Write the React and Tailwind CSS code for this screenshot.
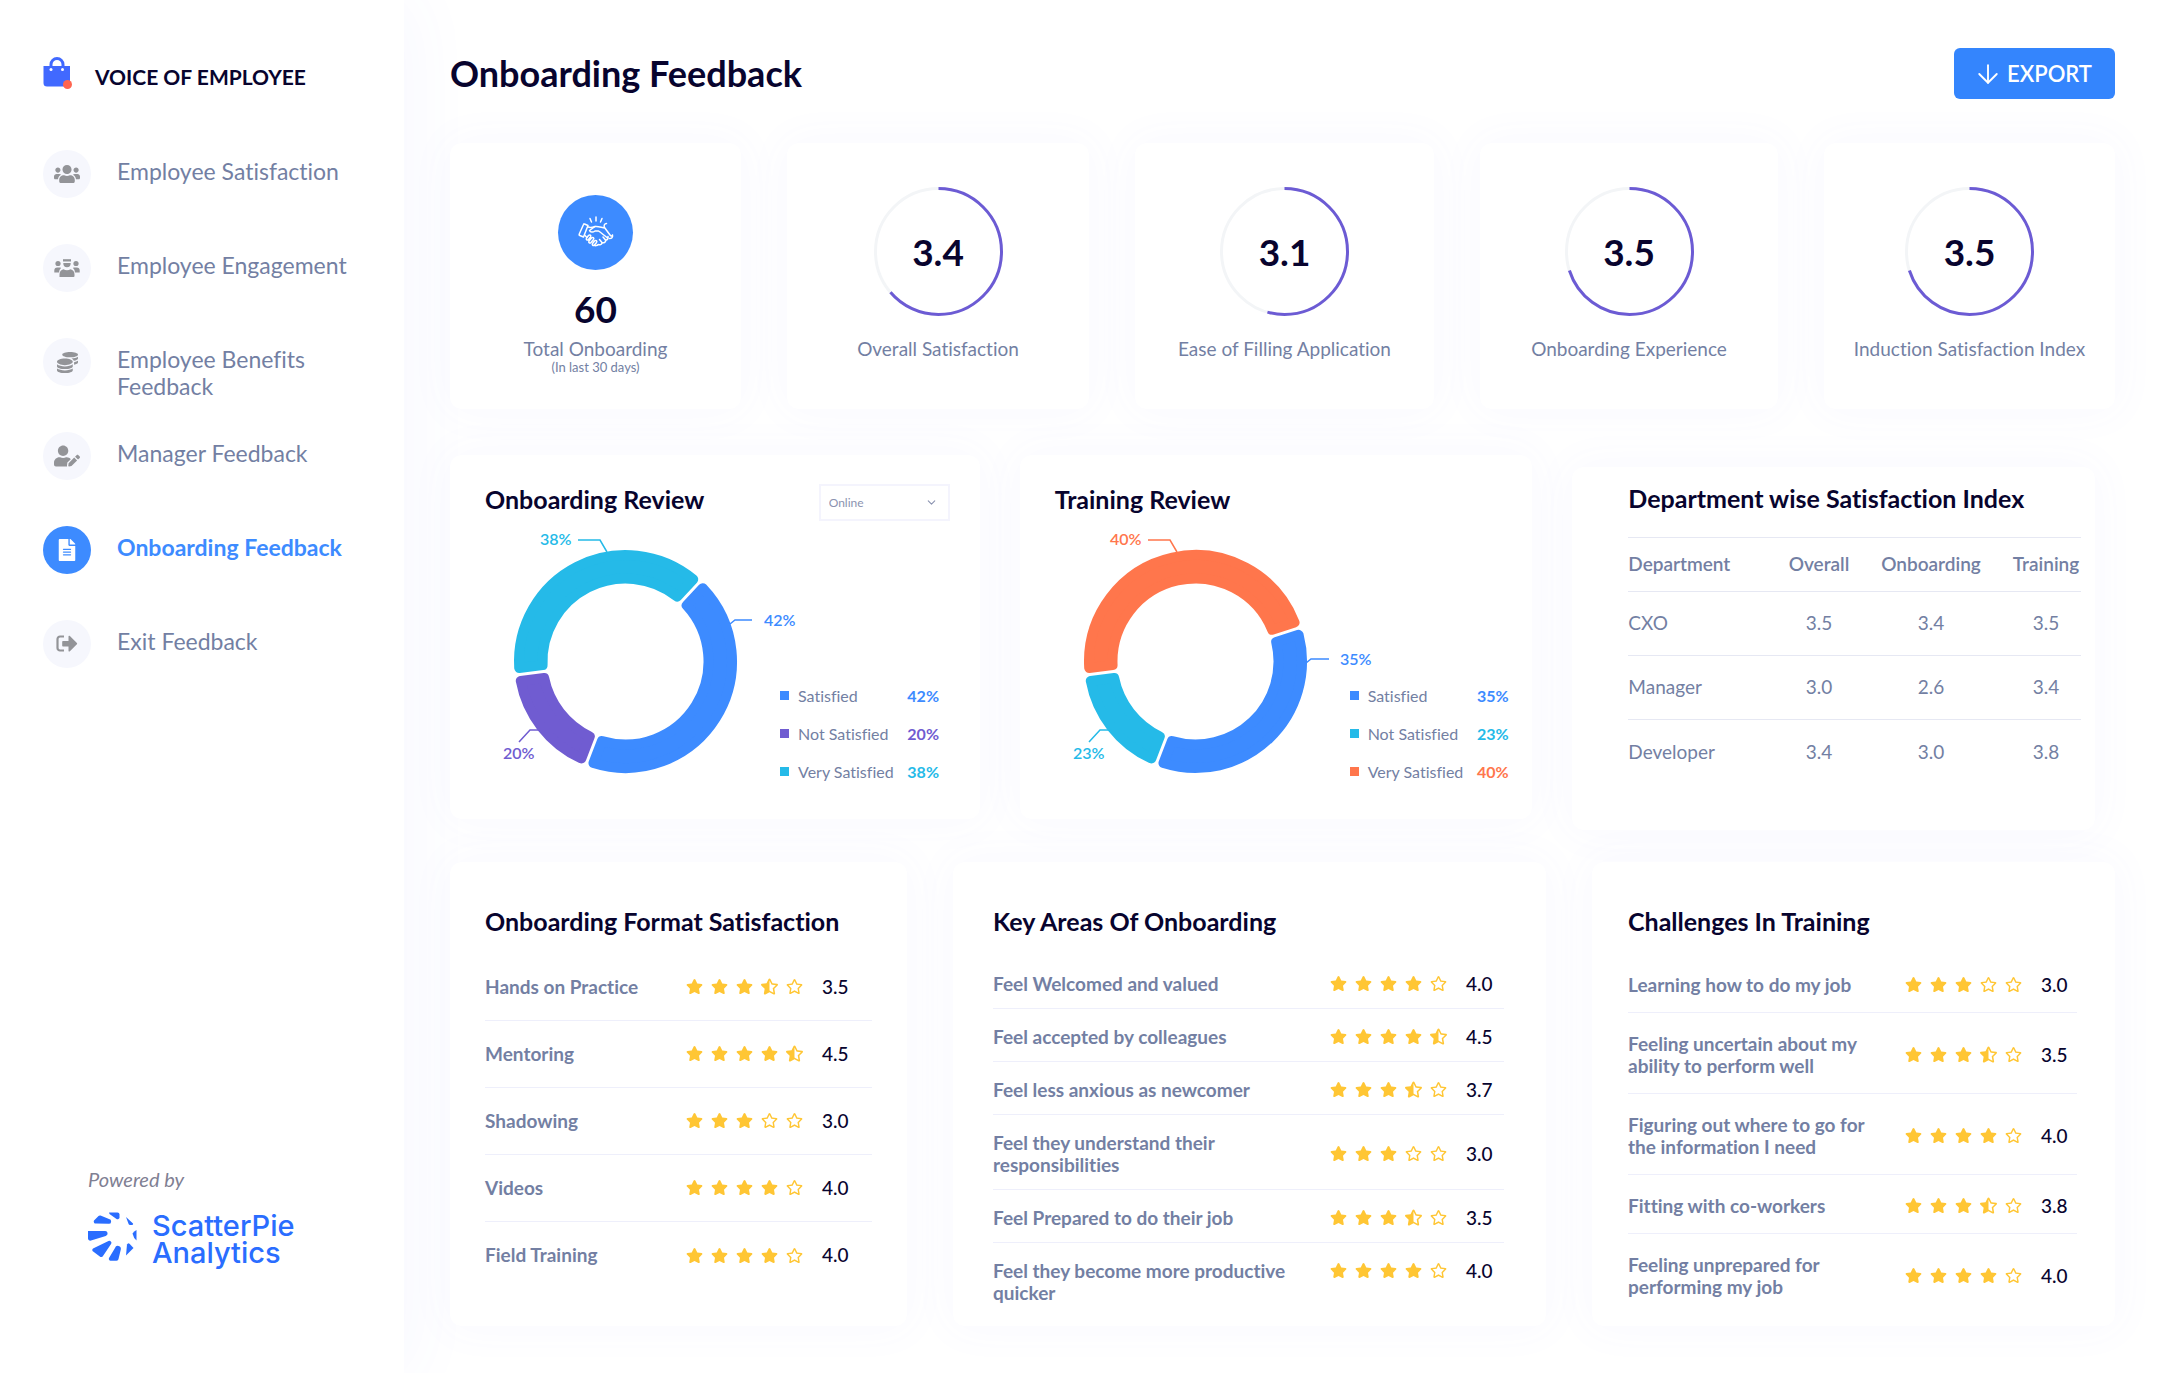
import React from "react";
import { FaUsers, FaCoins, FaUserEdit, FaFileAlt, FaStar, FaStarHalfAlt, FaRegStar } from "react-icons/fa";
import { ArrowDown, ChevronDown } from "lucide-react";

const BLUE = "#3d8bff";
const CYAN = "#25bae8";
const PURPLE = "#705cd1";
const ORANGE = "#ff764c";

function BagLogo() {
  return (
    <svg viewBox="0 0 30 34" className="h-[34px] w-[30px]" aria-hidden="true">
      <path d="M8 11V8.500a6 6 0 0 1 12 0V11" fill="none" stroke="#4169ff" strokeWidth="3" />
      <path d="M0.5 10h26.500v20.500h-23a3.500 3.500 0 0 1-3.500-3.500z" fill="#4169ff" />
      <circle cx="8" cy="13.5" r="1.5" fill="#fff" />
      <circle cx="19.5" cy="13.5" r="1.5" fill="#fff" />
      <circle cx="24.5" cy="28.5" r="4.5" fill="#ff6550" />
    </svg>
  );
}

function CrewIcon() {
  return (
    <svg viewBox="0 0 26 20" width="26" height="20" fill="currentColor" aria-hidden="true">
      <path d="M9 1.200h8v2.300H9z" />
      <path d="M9.300 5h7.400a3.700 4.300 0 0 1-7.400 0z" />
      <circle cx="4" cy="5.5" r="2.6" />
      <circle cx="22" cy="5.5" r="2.6" />
      <path d="M0.300 14.500v-2a3 3 0 0 1 3-3h2.400c.5 0 1 .2 1.300.4a6 6 0 0 0-2 4.600z" />
      <path d="M25.700 14.500v-2a3 3 0 0 0-3-3h-2.400c-.5 0-1 .2-1.300.4a6 6 0 0 1 2 4.600z" />
      <path d="M5.500 19v-2.500a5.500 5.500 0 0 1 4-5.200c1.800 1.300 5.200 1.300 7 0a5.500 5.500 0 0 1 4 5.200V18a1 1 0 0 1-1 1z" />
    </svg>
  );
}

function ExitIcon() {
  return (
    <svg viewBox="0 0 22 18" width="22" height="18" fill="currentColor" aria-hidden="true">
      <path d="M8 1.500H4A2.500 2.500 0 0 0 1.500 4v9A2.500 2.500 0 0 0 4 15.500h4" fill="none" stroke="currentColor" strokeWidth="2.2" />
      <path d="M7 6h5.500V1.500a.8.8 0 0 1 1.400-.5l7 7a1 1 0 0 1 0 1.300l-7 7a.8.8 0 0 1-1.400-.6V11.500H7a.8.8 0 0 1-.8-.8V6.800A.8.8 0 0 1 7 6z" />
    </svg>
  );
}

function HandshakeIcon() {
  return (
    <svg viewBox="0 0 36 36" className="size-9" fill="none" stroke="#fff" strokeWidth="1.5" strokeLinecap="round" strokeLinejoin="round" aria-hidden="true">
      <path d="M18 2v4M12 3.500l1.500 3.500M24 3.500L22.500 7" />
      <path d="M6.500 9l3.500 1.500L5.500 22l-3.700-1.500q-1 0-.5-1.500L5.500 9.500q.3-.8 1-.5z" />
      <path d="M10 12c3 1 4 .5 7-.5 3-.5 5 .5 10 1.500M28.500 8.500c-2 0-3 2-2 4L32 20q1.500 2 2.500 0M34.500 20c.5 2.500-1 3.500-3 3.500" />
      <path d="M17 11.500l-5.500 4c.8 2 3.500 2 5.500.5h3.500c3 2 5 4 8.500 6.500M7 20.500l2 2M30 21.500c.5 2-.5 3.500-2.300 3.700 0 2-1.700 3-3.500 2.500-.7 2-2.500 2.500-4 1.800-1 1.300-3 1.500-4 .5" />
      <path d="M10.500 20.500l-2 2.500c-.8 1.500.8 2.800 2 1.500l2-2.500c1-1.500-.8-2.800-2-1.500zM13.500 23l-2.500 3c-.8 1.500.8 2.800 2 1.500l2.500-3c1-1.500-.8-2.800-2-1.500zM16.500 26l-2 2.500c-.8 1.500.8 2.800 2 1.500l2-2.500c1-1.500-.8-2.800-2-1.500z" />
      <path d="M25 22l2.700 3.200M21.500 24.500l2.700 3.200" />
    </svg>
  );
}

function PieLogo() {
  const petals = [
    "M21 .5h8.500a2 2 0 0 1 2 2V5.500a2 2 0 0 1-3 1.500L21.500 2z",
    "M6 8.500l4.500-4.500a2 2 0 0 1 2-.5L21 7a2.200 2.200 0 0 1-.5 4.800L8 11.500A2 2 0 0 1 6 8.500z",
    "M0 19h17a2.500 2.500 0 0 1 .8 4.900L3 28.500a2.200 2.200 0 0 1-3-2z",
    "M5 36.500l15.500-7.400a2 2 0 0 1 2.700 2.700L15 44a2 2 0 0 1-3.200.4L4.500 39a2 2 0 0 1 .5-2.500z",
    "M21 46l6-10a3 3 0 0 1 5.800 1.500L30.500 47a2 2 0 0 1-2 1.800h-6A2 2 0 0 1 21 46z",
    "M38 43.500l1-11a1.500 1.500 0 0 1 2.500-.7l4 4.200z",
    "M44.500 21.500q1.500-2.500 4-3.500v10.500q-3-2.500-4-7z",
    "M38 5l7 6.500a1 1 0 0 1-1 1.500h-2a1.500 1.500 0 0 1-1.300-.8z",
  ];
  return (
    <svg viewBox="0 0 49 49" className="size-[49px] shrink-0" fill="#2a6dff" aria-hidden="true">
      {petals.map((d) => <path key={d} d={d} />)}
    </svg>
  );
}

const NAV = [
  { label: "Employee Satisfaction", icon: <FaUsers size={26} /> },
  { label: "Employee Engagement", icon: <CrewIcon /> },
  { label: "Employee Benefits Feedback", icon: <FaCoins size={21} /> },
  { label: "Manager Feedback", icon: <FaUserEdit size={26} /> },
  { label: "Onboarding Feedback", icon: <FaFileAlt size={22} />, active: true },
  { label: "Exit Feedback", icon: <ExitIcon /> },
];

function Sidebar() {
  return (
    <aside className="flex w-[404px] shrink-0 flex-col bg-white pt-14 pb-[107px] shadow-[0_0_70px_rgba(90,110,255,0.06)]">
      <div className="flex items-start gap-[22px] pl-[43px]">
        <BagLogo />
        <span className="pt-1 text-[21px] leading-[34px] font-bold text-[#08042e]">VOICE OF EMPLOYEE</span>
      </div>
      <nav className="mt-14">
        <ul>
          {NAV.map((n) => (
            <li key={n.label} className="h-[94px]">
              <a href="#" className="flex items-start gap-[26px] pl-[43px]">
                <span className={n.active ? "flex size-12 shrink-0 items-center justify-center rounded-full bg-[#3d8bff] text-white" : "flex size-12 shrink-0 items-center justify-center rounded-full bg-[#f6f7fd] text-[#939498]"}>
                  {n.icon}
                </span>
                <span className={n.active ? "w-[240px] pt-2 text-[23px] leading-[27px] font-bold text-[#3d8bff]" : "w-[240px] pt-2 text-[23px] leading-[27px] text-[#737fa3]"}>
                  {n.label}
                </span>
              </a>
            </li>
          ))}
        </ul>
      </nav>
      <div className="mt-auto pl-[88px]">
        <p className="text-[20px] leading-6 text-[#7f8093] italic">Powered by</p>
        <div className="mt-[21px] flex items-start gap-[15px]">
          <PieLogo />
          <p className="font-[Inter] text-[29px] leading-[27px] font-medium text-[#2a6dff]">ScatterPie<br />Analytics</p>
        </div>
      </div>
    </aside>
  );
}

function Card({ className, children }) {
  return <section className={"rounded-xl bg-white shadow-[0_0_44px_4px_rgba(90,110,255,0.04)] " + className}>{children}</section>;
}

function Ring({ value, share, label }) {
  const r = 63;
  const c = 2 * Math.PI * r;
  return (
    <Card className="flex flex-col items-center pt-11">
      <div className="grid size-[129px] place-items-center">
        <svg viewBox="0 0 129 129" className="col-start-1 row-start-1 size-[129px] -rotate-90" fill="none" aria-hidden="true">
          <circle cx="64.5" cy="64.5" r={r} stroke="#f3f5f7" strokeWidth="3" />
          <circle cx="64.5" cy="64.5" r={r} stroke="#6c5bd4" strokeWidth="3" strokeDasharray={`${c * share} ${c}`} />
        </svg>
        <span className="col-start-1 row-start-1 text-[37px] leading-11 font-bold text-[#08042e]">{value}</span>
      </div>
      <p className="mt-[21px] text-[19px] leading-6 whitespace-nowrap text-[#737fa3]">{label}</p>
    </Card>
  );
}

function arcPath(a0, a1) {
  const cx = 140.5, cy = 140.5, ro = 106.5, ri = 83, inset = 6.5;
  const rad = Math.PI / 180;
  const pt = (r, a) => `${(cx + r * Math.sin(a)).toFixed(2)} ${(cy - r * Math.cos(a)).toFixed(2)}`;
  const oo = Math.asin(inset / ro), oi = Math.asin(inset / ri);
  const s = a0 * rad, e = a1 * rad;
  const large = a1 - a0 > 180 ? 1 : 0;
  return `M${pt(ro, s + oo)}A${ro} ${ro} 0 ${large} 1 ${pt(ro, e - oo)}L${pt(ri, e - oi)}A${ri} ${ri} 0 ${large} 0 ${pt(ri, s + oi)}Z`;
}

function Donut({ segments, callouts }) {
  return (
    <svg viewBox="0 0 295 263" className="h-[263px] w-[295px] shrink-0 overflow-visible" role="img" aria-label="Share of answers">
      {segments.map((s) => (
        <path key={s.from} d={arcPath(s.from, s.to)} fill={s.color} stroke={s.color} strokeWidth="10" strokeLinejoin="round" />
      ))}
      {callouts.map((c) => (
        <g key={c.text}>
          <polyline points={c.line} fill="none" stroke={c.color} strokeWidth="1.5" />
          <text x={c.x} y={c.y} fill={c.color} className="text-[16px] font-semibold">{c.text}</text>
        </g>
      ))}
    </svg>
  );
}

function Legend({ rows }) {
  return (
    <ul className="w-[159px] shrink-0 self-end">
      {rows.map((r) => (
        <li key={r.label} className="flex h-[38px] items-end leading-6">
          <span className="mb-2 size-[9px]" style={{ background: r.color }} />
          <span className="ml-[9px] flex-1 text-[16px] whitespace-nowrap text-[#737fa3]">{r.label}</span>
          <span className="text-[16px] font-bold" style={{ color: r.color }}>{r.pct}</span>
        </li>
      ))}
    </ul>
  );
}

function Title({ children }) {
  return <h2 className="text-[25px] leading-[30px] font-bold whitespace-nowrap text-[#08042e]">{children}</h2>;
}

function Stars({ n }) {
  return (
    <span className="flex w-[117px] shrink-0 justify-between text-[#ffc634]" role="img" aria-label={n + " stars"}>
      {[1, 2, 3, 4, 5].map((i) =>
        n >= i ? <FaStar key={i} size={17} /> : n >= i - 0.5 ? <FaStarHalfAlt key={i} size={17} /> : <FaRegStar key={i} size={17} />
      )}
    </span>
  );
}

function Rating({ row, rowClass, labelClass }) {
  const [label, stars, value, top] = row;
  return (
    <li className={"flex justify-between border-b border-[#eeeffb] last:border-b-0 " + (top ? "items-start " : "items-center ") + rowClass}>
      <span className={"text-[19px] leading-[22px] font-bold text-[#737fa3] " + labelClass}>{label}</span>
      <span className="flex items-center gap-[19px]">
        <Stars n={stars} />
        <span className="w-[26px] text-[19px] leading-[22px] font-medium text-[#08042e]">{value}</span>
      </span>
    </li>
  );
}

const FORMAT = [
  ["Hands on Practice", 3.5, "3.5"],
  ["Mentoring", 4.5, "4.5"],
  ["Shadowing", 3, "3.0"],
  ["Videos", 4, "4.0"],
  ["Field Training", 4, "4.0"],
];
const AREAS = [
  ["Feel Welcomed and valued", 4, "4.0"],
  ["Feel accepted by colleagues", 4.5, "4.5"],
  ["Feel less anxious as newcomer", 3.5, "3.7"],
  ["Feel they understand their responsibilities", 3, "3.0"],
  ["Feel Prepared to do their job", 3.5, "3.5"],
  ["Feel they become more productive quicker", 4, "4.0", true],
];
const CHALLENGES = [
  ["Learning how to do my job", 3, "3.0"],
  ["Feeling uncertain about my ability to perform well", 3.5, "3.5"],
  ["Figuring out where to go for the information I need", 4, "4.0"],
  ["Fitting with co-workers", 3.5, "3.8"],
  ["Feeling unprepared for performing my job", 4, "4.0"],
];
const DEPARTMENTS = [
  ["CXO", "3.5", "3.4", "3.5"],
  ["Manager", "3.0", "2.6", "3.4"],
  ["Developer", "3.4", "3.0", "3.8"],
];

export default function App() {
  return (
    <div className="flex min-h-screen bg-white font-[Lato,sans-serif] text-[#08042e] [font-variant-ligatures:none]">
      <Sidebar />
      <main className="min-w-0 flex-1 pt-12 pr-[46px] pb-10 pl-[46px]">
        <header className="flex items-center justify-between">
          <h1 className="text-[36px] leading-[51px] font-bold">Onboarding Feedback</h1>
          <button type="button" className="flex h-[51px] w-[161px] items-center justify-center gap-1 rounded-md bg-[#3485fd] pr-1 text-[22px] font-semibold text-white">
            <ArrowDown size={30} strokeWidth={1.5} />
            EXPORT
          </button>
        </header>

        <div className="mt-11 grid grid-cols-[291fr_302fr_299fr_298fr_291fr] gap-[46px]">
          <Card className="flex flex-col items-center pt-[52px] pb-9">
            <span className="flex size-[75px] items-center justify-center rounded-full bg-[#3d8bff]">
              <HandshakeIcon />
            </span>
            <p className="mt-[17px] text-[37px] leading-11 font-bold">60</p>
            <p className="mt-1.5 text-[19px] leading-6 text-[#737fa3]">Total Onboarding</p>
            <p className="text-[13px] leading-3 text-[#737fa3]">(In last 30 days)</p>
          </Card>
          <Ring value="3.4" share={0.637} label="Overall Satisfaction" />
          <Ring value="3.1" share={0.543} label="Ease of Filling Application" />
          <Ring value="3.5" share={0.7} label="Onboarding Experience" />
          <Ring value="3.5" share={0.7} label="Induction Satisfaction Index" />
        </div>

        <div className="mt-[46px] grid grid-cols-[530fr_513fr_523fr] items-start gap-x-10 pr-5">
          <Card className="pt-[29px] pr-[30px] pb-[35px] pl-[35px]">
            <div className="flex h-[37px] items-start justify-between">
              <Title>Onboarding Review</Title>
              <div className="grid">
                <select aria-label="Onboarding mode" defaultValue="Online" className="col-start-1 row-start-1 h-[37px] w-[131px] appearance-none border-2 border-[#f4f4fd] bg-white pl-2 text-[12px] text-[#8b93b0]">
                  <option>Online</option>
                  <option>Offline</option>
                </select>
                <ChevronDown size={13} className="pointer-events-none col-start-1 row-start-1 mr-3 self-center justify-self-end text-[#8b93b0]" />
              </div>
            </div>
            <div className="flex">
              <Donut
                segments={[
                  { from: 43, to: 201, color: BLUE },
                  { from: 201, to: 263, color: PURPLE },
                  { from: 263, to: 403, color: CYAN },
                ]}
                callouts={[
                  { text: "38%", x: 55, y: 24, line: "93,19 115,19 122,31", color: CYAN },
                  { text: "42%", x: 279, y: 105, line: "245,103 250,99 267,99", color: BLUE },
                  { text: "20%", x: 18, y: 238, line: "34,221 45,209 57,209", color: PURPLE },
                ]}
              />
              <Legend rows={[
                { label: "Satisfied", pct: "42%", color: BLUE },
                { label: "Not Satisfied", pct: "20%", color: PURPLE },
                { label: "Very Satisfied", pct: "38%", color: CYAN },
              ]} />
            </div>
          </Card>

          <Card className="pt-[29px] pb-[35px] pl-[35px]">
            <div className="flex h-[37px] items-start">
              <Title>Training Review</Title>
            </div>
            <div className="flex">
              <Donut
                segments={[
                  { from: 72, to: 201, color: BLUE },
                  { from: 201, to: 263, color: CYAN },
                  { from: 263, to: 432, color: ORANGE },
                ]}
                callouts={[
                  { text: "40%", x: 55, y: 24, line: "93,19 115,19 122,31", color: ORANGE },
                  { text: "35%", x: 285, y: 144, line: "251,142 256,138 274,138", color: BLUE },
                  { text: "23%", x: 18, y: 238, line: "34,221 45,209 57,209", color: CYAN },
                ]}
              />
              <Legend rows={[
                { label: "Satisfied", pct: "35%", color: BLUE },
                { label: "Not Satisfied", pct: "23%", color: CYAN },
                { label: "Very Satisfied", pct: "40%", color: ORANGE },
              ]} />
            </div>
          </Card>

          <Card className="mt-3 pt-4 pr-[14px] pb-[46px] pl-14">
            <Title>Department wise Satisfaction Index</Title>
            <table className="mt-6 w-full table-fixed text-center text-[19px] text-[#737fa3]">
              <colgroup>
                <col />
                <col className="w-16" />
                <col className="w-40" />
                <col className="w-[70px]" />
              </colgroup>
              <thead>
                <tr className="h-[54px] border-y border-[#e6e8f3]">
                  <th className="text-left font-semibold">Department</th>
                  <th className="font-semibold">Overall</th>
                  <th className="font-semibold">Onboarding</th>
                  <th className="font-semibold">Training</th>
                </tr>
              </thead>
              <tbody>
                {DEPARTMENTS.map((d) => (
                  <tr key={d[0]} className="h-16 border-b border-[#e6e8f3] last:border-b-0">
                    <td className="text-left">{d[0]}</td>
                    <td>{d[1]}</td>
                    <td>{d[2]}</td>
                    <td>{d[3]}</td>
                  </tr>
                ))}
              </tbody>
            </table>
          </Card>
        </div>

        <div className="mt-8 grid grid-cols-[457fr_593fr_523fr] gap-[46px]">
          <Card className="px-[35px] pt-11">
            <Title>Onboarding Format Satisfaction</Title>
            <ul className="mt-[18px]">
              {FORMAT.map((r) => <Rating key={r[0]} row={r} rowClass="h-[67px] pr-6" labelClass="" />)}
            </ul>
          </Card>
          <Card className="pt-11 pr-[42px] pb-[22px] pl-10">
            <Title>Key Areas Of Onboarding</Title>
            <ul className="mt-5">
              {AREAS.map((r) => <Rating key={r[0]} row={r} rowClass="pt-[17px] pb-[13px] pr-3 last:pb-0" labelClass="w-[300px]" />)}
            </ul>
          </Card>
          <Card className="pt-11 pr-[38px] pl-9">
            <Title>Challenges In Training</Title>
            <ul className="mt-[18px]">
              {CHALLENGES.map((r) => <Rating key={r[0]} row={r} rowClass="pt-5 pb-4 pr-[10px]" labelClass="w-[250px]" />)}
            </ul>
          </Card>
        </div>
      </main>
    </div>
  );
}
